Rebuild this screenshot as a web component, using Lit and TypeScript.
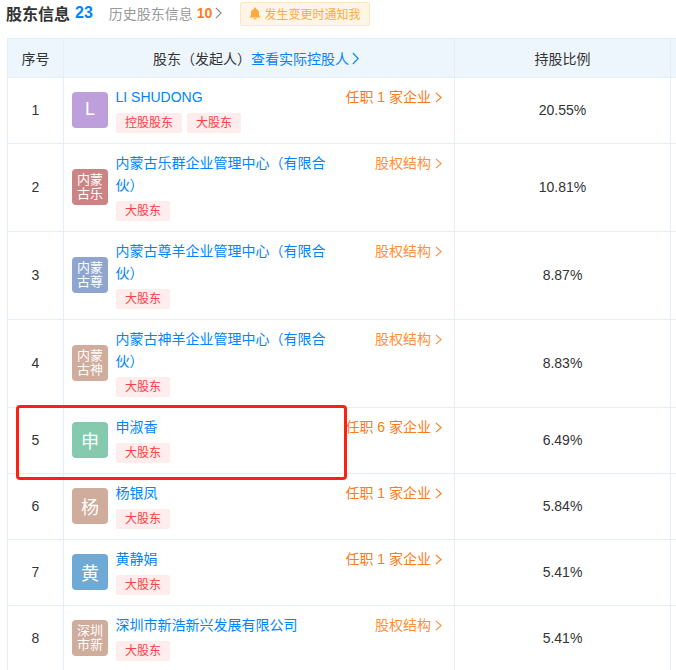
import { LitElement, html, css, svg } from "lit";
import { customElement } from "lit/decorators.js";

interface Row { n: number; name: string; av: string; color: string; tags: string[]; link: string; pct: string; two?: boolean; }

const rows: Row[] = [
  { n: 1, name: "LI SHUDONG", av: "L", color: "#bd9fdb", tags: ["控股股东", "大股东"], link: "任职 1 家企业", pct: "20.55%" },
  { n: 2, name: "内蒙古乐群企业管理中心（有限合伙）", av: "内蒙古乐", color: "#cb8484", tags: ["大股东"], link: "股权结构", pct: "10.81%", two: true },
  { n: 3, name: "内蒙古尊羊企业管理中心（有限合伙）", av: "内蒙古尊", color: "#8ea5cf", tags: ["大股东"], link: "股权结构", pct: "8.87%", two: true },
  { n: 4, name: "内蒙古神羊企业管理中心（有限合伙）", av: "内蒙古神", color: "#cfac9b", tags: ["大股东"], link: "股权结构", pct: "8.83%", two: true },
  { n: 5, name: "申淑香", av: "申", color: "#85c9ae", tags: ["大股东"], link: "任职 6 家企业", pct: "6.49%" },
  { n: 6, name: "杨银凤", av: "杨", color: "#cfac9b", tags: ["大股东"], link: "任职 1 家企业", pct: "5.84%" },
  { n: 7, name: "黄静娟", av: "黄", color: "#6faad7", tags: ["大股东"], link: "任职 1 家企业", pct: "5.41%" },
  { n: 8, name: "深圳市新浩新兴发展有限公司", av: "深圳市新", color: "#cfac9b", tags: ["大股东"], link: "股权结构", pct: "5.41%", two: true },
];

const chev = (w = 7, h = 11) => svg`<svg class="chev" width=${w} height=${h} viewBox="0 0 8 13" preserveAspectRatio="none" fill="none" stroke="currentColor" stroke-width="1.3"><polyline points="1,1 7,6.5 1,12"></polyline></svg>`;

@customElement("app-root")
export class AppRoot extends LitElement {
  static styles = css`
    :host { display: block; position: relative; width: 676px; height: 670px; overflow: hidden; background: #fff;
      font-family: "Liberation Sans", "Noto Sans CJK SC", sans-serif; font-size: 14px; color: #333; }
    .top { display: flex; align-items: center; height: 26px; padding: 1px 0 0 6px; box-sizing: border-box; }
    .title { font-size: 16px; font-weight: 700; color: #333; margin-bottom: 2px; }
    .count { font-size: 16px; font-weight: 700; color: #0084ff; margin: 0 0 2px 5px; }
    .hist { margin: 0 0 2px 16px; color: #999; display: flex; align-items: center; }
    .hist b { color: #ff7a1a; margin-left: 4px; font-weight: 700; }
    .hist .chev { margin-left: 3px; color: #888; }
    .notice { margin-left: 18px; width: 130px; height: 24px; box-sizing: border-box; border: 1px solid #ffe7bd; border-radius: 2px; background: #fff5e5;
      color: #ffa940; font-size: 12px; display: flex; align-items: center; padding-left: 8px; gap: 3px; }
    .table { margin: 12px 0 0 7px; width: 720px; border-top: 1px solid #e4eef6; border-left: 1px solid #e4eef6; }
    .row { display: grid; grid-template-columns: 56px 391px 216px 60px; border-bottom: 1px solid #e4eef6; box-sizing: border-box; }
    .row > div { border-right: 1px solid #e4eef6; box-sizing: border-box; }
    .head { height: 39px; background: #eef6fd; }
    .h { display: flex; align-items: center; justify-content: center; }
    .h a { color: #0084ff; display: inline-flex; align-items: center; }
    .h a .chev { margin-left: 3px; }
    .h-name { padding-right: 6px; }
    .num { display: flex; align-items: center; justify-content: center; padding-bottom: 1px; }
    .pct { display: flex; align-items: center; justify-content: center; padding-bottom: 1px; }
    .cell { display: flex; align-items: center; padding: 8px 12px 10px 8px; }
    .av { flex: none; width: 36px; height: 36px; border-radius: 4px; color: #fff; display: flex; align-items: center; justify-content: center; text-align: center; font-size: 18px; }
    .av.two { font-size: 13px; line-height: 14px; padding: 0 4px; box-sizing: border-box; }
    .info { flex: none; width: 220px; margin-left: 8px; align-self: flex-start; }
    .name { color: #0084ff; line-height: 22px; margin-left: -0.5px; }
    .tags { display: flex; gap: 5px; margin-top: 5px; }
    .tag { height: 20px; line-height: 20px; padding: 0 9px; background: #ffecec; color: #fd3f3f; font-size: 12px; border-radius: 2px; }
    .link { margin-left: auto; align-self: flex-start; color: #ff7a1a; line-height: 22px; display: flex; align-items: center; white-space: nowrap; }
    .link .chev { margin-left: 4px; }
    .link.soft { color: #ff8f3f; }
    .mark { position: absolute; left: 16px; top: 405px; width: 331px; height: 75px; box-sizing: border-box; border: 3px solid #fe2015; border-radius: 4px; pointer-events: none; }
  `;

  render() {
    return html`
      <div class="top">
        <span class="title">股东信息</span><span class="count">23</span>
        <span class="hist">历史股东信息<b>10</b>${chev(7, 12)}</span>
        <span class="notice">
          <svg width="12" height="13" viewBox="0 0 12 13" fill="currentColor"><path d="M6 0.5c.6 0 1 .4 1 1v.4c1.900.5 3 2 3 4v2.300l1.200 1.600c.2.3 0 .7-.4.7H1.200c-.4 0-.6-.4-.4-.7L2 8.200V5.900c0-2 1.100-3.500 3-4v-.4c0-.6.4-1 1-1zM4.500 11.300h3c0 .8-.7 1.300-1.500 1.300s-1.500-.5-1.500-1.300z"></path></svg>
          发生变更时通知我
        </span>
      </div>
      <div class="table">
        <div class="row head">
          <div class="h">序号</div>
          <div class="h h-name">股东（发起人）<a>查看实际控股人${chev(7, 13)}</a></div>
          <div class="h">持股比例</div>
          <div></div>
        </div>
        ${rows.map((r) => html`
          <div class="row">
            <div class="num">${r.n}</div>
            <div class="cell">
              <div class="av ${r.two ? "two" : ""}" style="background:${r.color}">${r.av}</div>
              <div class="info">
                <div class="name">${r.name}</div>
                <div class="tags">${r.tags.map((t) => html`<span class="tag">${t}</span>`)}</div>
              </div>
              <a class="link ${r.two ? "soft" : ""}">${r.link}${chev()}</a>
            </div>
            <div class="pct">${r.pct}</div>
            <div></div>
          </div>`)}
      </div>
      <div class="mark"></div>
    `;
  }
}
